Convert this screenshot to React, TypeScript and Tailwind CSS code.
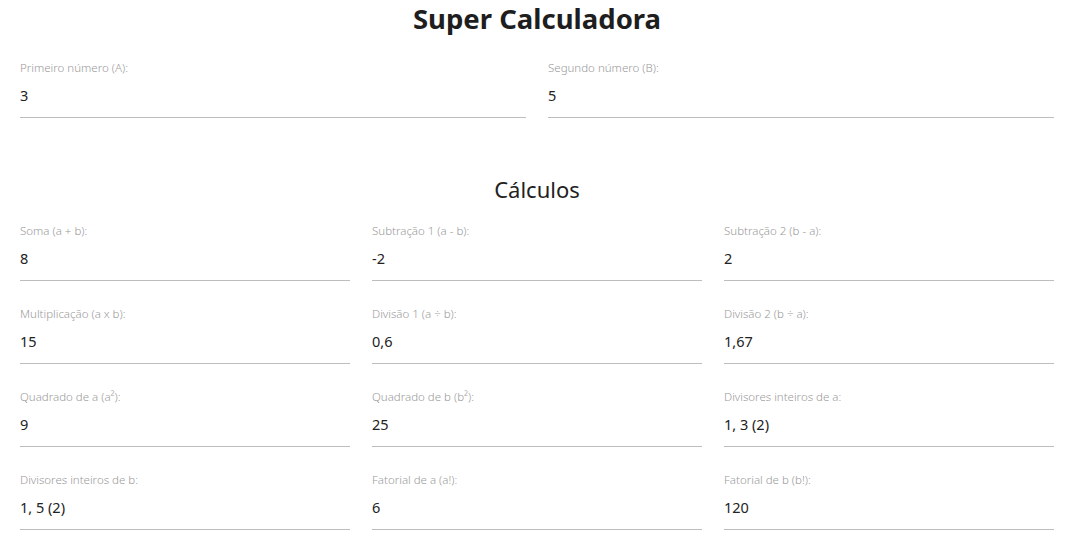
import React from "react";

function Field({ label, value }: { label: React.ReactNode; value: string }) {
  return (
    <div className="flex flex-col">
      <div className="h-4 text-[11.5px] leading-4 text-[#9a9a9a] font-light">{label}</div>
      <div className="mt-1 pt-[5px] pb-[12px] border-b border-[#bdbdbd] text-[14.5px] leading-5 text-[#222]">
        {value}
      </div>
    </div>
  );
}

export default function App() {
  const fields: [React.ReactNode, string][] = [
    ["Soma (a + b):", "8"],
    ["Subtração 1 (a - b):", "-2"],
    ["Subtração 2 (b - a):", "2"],
    ["Multiplicação (a x b):", "15"],
    ["Divisão 1 (a ÷ b):", "0,6"],
    ["Divisão 2 (b ÷ a):", "1,67"],
    ["Quadrado de a (a²):", "9"],
    ["Quadrado de b (b²):", "25"],
    ["Divisores inteiros de a:", "1, 3 (2)"],
    ["Divisores inteiros de b:", "1, 5 (2)"],
    ["Fatorial de a (a!):", "6"],
    ["Fatorial de b (b!):", "120"],
  ];
  return (
    <div
      className="bg-white min-h-screen pl-5 pr-[15px] pt-px"
      style={{ fontFamily: '"Noto Sans", "Open Sans", sans-serif' }}
    >
      <h1 className="text-center text-[27.5px] leading-9 font-bold text-[#1e1e1e]">Super Calculadora</h1>
      <div className="mt-[23px] grid grid-cols-2 gap-x-[22px]">
        <Field label="Primeiro número (A):" value="3" />
        <Field label="Segundo número (B):" value="5" />
      </div>
      <h2 className="mt-[56px] text-center text-[22px] leading-[30px] text-[#222]">Cálculos</h2>
      <div className="mt-[19px] grid grid-cols-3 gap-x-[22px] gap-y-[25px]">
        {fields.map(([l, v], i) => (
          <Field key={i} label={l} value={v} />
        ))}
      </div>
    </div>
  );
}
